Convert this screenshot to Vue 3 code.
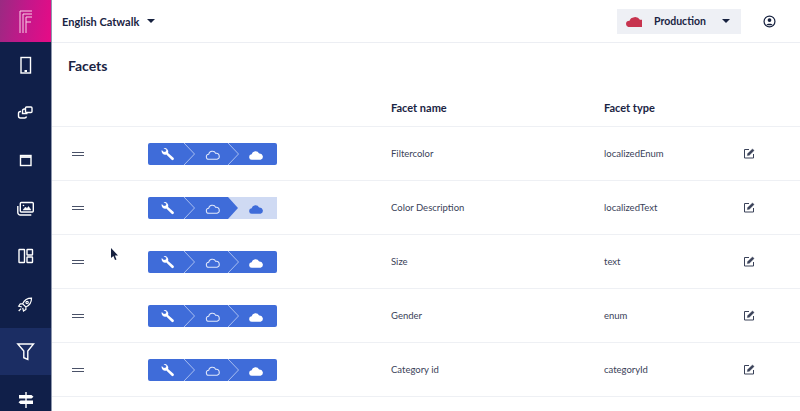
<script setup>
const rows = [
  { name: 'Filtercolor', type: 'localizedEnum', partial: false },
  { name: 'Color Description', type: 'localizedText', partial: true },
  { name: 'Size', type: 'text', partial: false },
  { name: 'Gender', type: 'enum', partial: false },
  { name: 'Category id', type: 'categoryId', partial: false }
]
const cloud = 'M5 12.5a3 3 0 0 1-.4-6 4.4 4.4 0 0 1 8.300-1 3.600 3.600 0 0 1 1.600 7z'
</script>

<template>
  <div class="app">
    <aside class="side">
      <div class="logo">
        <svg width="14" height="23" viewBox="0 0 14 23" fill="none" stroke="#f9d3e6" stroke-width="1">
          <path d="M1 23V1h12M4 23V4h9M7 23V7h6M7 12h5" />
        </svg>
      </div>
      <div class="nav">
        <svg viewBox="0 0 24 24"><rect x="7" y="3.500" width="9.500" height="15.500" /><path d="M10.500 17h2.500" stroke-width="2" /></svg>
      </div>
      <div class="nav">
        <svg viewBox="0 0 24 24"><rect x="11.500" y="6" width="6.500" height="5.500" rx="1" /><path d="M11.500 8H10.500a2 2 0 0 0-2 2v2.500h5" /><path d="M7 10.500H6.500a2 2 0 0 0-2 2v2.500a2 2 0 0 0 2 2h4a2 2 0 0 0 2-1.500" /></svg>
      </div>
      <div class="nav">
        <svg viewBox="0 0 24 24"><rect x="6.500" y="6.500" width="10.500" height="10" /><path d="M6.500 8h10.500" stroke-width="1.800" /></svg>
      </div>
      <div class="nav">
        <svg viewBox="0 0 24 24"><rect x="6.300" y="5.500" width="13" height="9.500" rx="1" /><path d="M3.800 9v6.500a2.500 2.500 0 0 0 2.500 2.500h11" /><path d="M9 13l2.500-3 1.500 1.500 1.500-2 2.500 3.500z" fill="#fff" stroke-width="0.500" /><circle cx="9.500" cy="8.500" r="0.800" fill="#fff" stroke="none" /></svg>
      </div>
      <div class="nav">
        <svg viewBox="0 0 24 24"><rect x="5" y="5.500" width="5.500" height="13" rx="0.500" /><rect x="13" y="5.500" width="5.500" height="5.500" rx="0.500" /><rect x="13" y="13" width="5.500" height="5.500" rx="0.500" /></svg>
      </div>
      <div class="nav">
        <svg viewBox="0 0 24 24"><g transform="translate(1.500 3) scale(.8)"><path d="M20 4c-5 0-9 2.500-11 7l4 4c4.500-2 7-6 7-11zM9 11H6l-2 3 4 1M13 15v3l-3 2-1-4M7 17l-3 3" stroke-width="1.500" /><circle cx="14.500" cy="9.500" r="1.500" /></g></svg>
      </div>
      <div class="nav active">
        <svg viewBox="0 0 24 24"><path d="M3.800 5h15.700l-5.700 7v8.500l-4-1.800V12z" /></svg>
      </div>
      <div class="nav">
        <svg viewBox="0 0 24 24"><path d="M12 5v16" /><path d="M5 8h12.500l2 1.700-2 1.800H5zM19 13.500H6.500l-2 1.800 2 1.700H19z" fill="#fff" stroke="none" /></svg>
      </div>
    </aside>

    <main class="main">
      <header class="top">
        <div class="catalog">English Catwalk <span class="caret"></span></div>
        <div class="top-right">
          <div class="env">
            <svg class="env-cloud" viewBox="0 0 17 12"><path :d="cloud" fill="#c7344f" transform="translate(-1.200 -1) scale(1.250 1.050)" /></svg>
            <span class="env-name">Production</span>
            <span class="caret"></span>
          </div>
          <svg class="user" viewBox="0 0 16 16" fill="none" stroke="#16213f" stroke-width="1.300">
            <circle cx="8" cy="8" r="5.800" />
            <circle cx="8" cy="6.500" r="2" fill="#16213f" stroke="none" />
            <path d="M4.500 12c1-2 6-2 7 0" fill="#16213f" stroke="none" />
          </svg>
        </div>
      </header>

      <h1 class="title">Facets</h1>

      <div class="row head">
        <div class="c-handle"></div>
        <div class="c-stage"></div>
        <div class="c-name">Facet name</div>
        <div class="c-type">Facet type</div>
        <div class="c-edit"></div>
      </div>

      <div v-for="row in rows" :key="row.name" class="row">
        <div class="c-handle"><span class="handle"></span></div>
        <div class="c-stage">
          <div class="stages">
            <svg width="129" height="22" viewBox="0 0 129 22">
              <path v-if="row.partial" d="M0 2a2 2 0 0 1 2-2h127v22H2a2 2 0 0 1-2-2z" fill="#cfdaf3" />
              <path v-if="row.partial" d="M0 2a2 2 0 0 1 2-2h78l10 11-10 11H2a2 2 0 0 1-2-2z" fill="#3f6cd9" />
              <path v-else d="M0 2a2 2 0 0 1 2-2h125a2 2 0 0 1 2 2v18a2 2 0 0 1-2 2H2a2 2 0 0 1-2-2z" fill="#3f6cd9" />
              <path d="M36 0l10.500 11-10.500 11" fill="none" stroke="#a9bef0" stroke-width="1" />
              <path v-if="!row.partial" d="M80 0l10.500 11-10.500 11" fill="none" stroke="#a9bef0" stroke-width="1" />
              <path d="M15.500 5.300a3.600 3.600 0 0 1 4.600 4.600l5.400 4.900a1.300 1.300 0 0 1-1.900 1.900l-5.300-5.200a3.600 3.600 0 0 1-4.600-4.400l2.200 2 2-.6.500-1.800z" fill="#fff" />
              <path :d="cloud" transform="translate(56.800 5.700) scale(.85)" fill="none" stroke="#dfe7fa" stroke-width="1.200" />
              <path :d="cloud" transform="translate(99.500 5.500) scale(.9)" :fill="row.partial ? '#3f6cd9' : '#fff'" />
            </svg>
          </div>
        </div>
        <div class="c-name">{{ row.name }}</div>
        <div class="c-type">{{ row.type }}</div>
        <div class="c-edit">
          <svg width="11" height="11" viewBox="0 0 11 11" fill="none" stroke="#3a4259" stroke-width="1">
            <path d="M9.500 6v4H.5V1.500H5" />
            <path d="M3.300 7.600l.4-2 4.800-4.700 1.600 1.600-4.800 4.700z" fill="#3a4259" stroke-width="0.400" />
          </svg>
        </div>
      </div>
    </main>

    <svg class="cursor" width="9" height="13" viewBox="0 0 9 13"><path d="M1 0v10l2.400-2 1.600 4 1.500-.6-1.600-3.900H8z" fill="#16213f" /></svg>
  </div>
</template>

<style>
html, body { margin: 0; background: #fff; overflow: hidden; }
</style>

<style scoped>
.app {
  position: relative;
  display: flex;
  width: 800px;
  height: 411px;
  overflow: hidden;
  font-family: Lato, "Open Sans", sans-serif;
  color: #1a2443;
}
.side {
  width: 52px;
  flex: none;
  background: #101f49;
  border-right: 1px solid #8e97ad;
  box-sizing: border-box;
}
.logo {
  height: 42px;
  display: flex;
  align-items: center;
  justify-content: center;
  background: linear-gradient(100deg, #9a2a82 0%, #c4178a 50%, #e70b86 100%);
}
.nav {
  height: 47.600px;
  display: flex;
  align-items: center;
  justify-content: center;
}
.nav svg {
  width: 24px;
  height: 24px;
  fill: none;
  stroke: #fff;
  stroke-width: 1.400;
}
.nav.active { background: #1b2d63; }
.main { flex: 1; min-width: 0; }
.top {
  height: 42px;
  display: flex;
  align-items: center;
  justify-content: space-between;
  padding: 0 23px 0 10px;
  border-bottom: 1px solid #eceef3;
}
.catalog {
  font-size: 11px;
  font-weight: 700;
  display: flex;
  align-items: center;
  gap: 8px;
}
.caret {
  display: inline-block;
  width: 0;
  height: 0;
  border-left: 4px solid transparent;
  border-right: 4px solid transparent;
  border-top: 4px solid #16213f;
}
.top-right { display: flex; align-items: center; gap: 21px; }
.env {
  width: 124px;
  height: 25px;
  box-sizing: border-box;
  background: #eef0f5;
  display: flex;
  align-items: center;
  padding: 0 8px;
  font-size: 10.500px;
  font-weight: 700;
}
.env-cloud { width: 17px; height: 12px; flex: none; }
.env-name { margin-left: 12px; margin-right: 16px; }
.user { width: 15px; height: 15px; }
.title {
  margin: 0;
  height: 27px;
  padding: 14px 0 0 16px;
  font-size: 14px;
  line-height: 18px;
  font-weight: 700;
}
.row {
  display: flex;
  align-items: center;
  height: 53px;
  border-bottom: 1px solid #eef0f4;
  font-size: 9.500px;
  color: #3a4259;
}
.row.head {
  height: 43px;
  padding-top: 4px;
  box-sizing: border-box;
  font-size: 11px;
  font-weight: 700;
  color: #1a2443;
}
.c-handle { width: 96px; padding-left: 20px; box-sizing: border-box; flex: none; }
.handle {
  display: block;
  width: 12px;
  height: 2px;
  border-top: 1.500px solid #4a5268;
  border-bottom: 1.500px solid #4a5268;
}
.c-stage { width: 243px; flex: none; }
.stages { display: flex; }
.stages svg { display: block; }
.c-name { width: 213px; flex: none; }
.c-type { width: 140px; flex: none; }
.c-edit { display: flex; }
.cursor { position: absolute; left: 110px; top: 248px; }
</style>
